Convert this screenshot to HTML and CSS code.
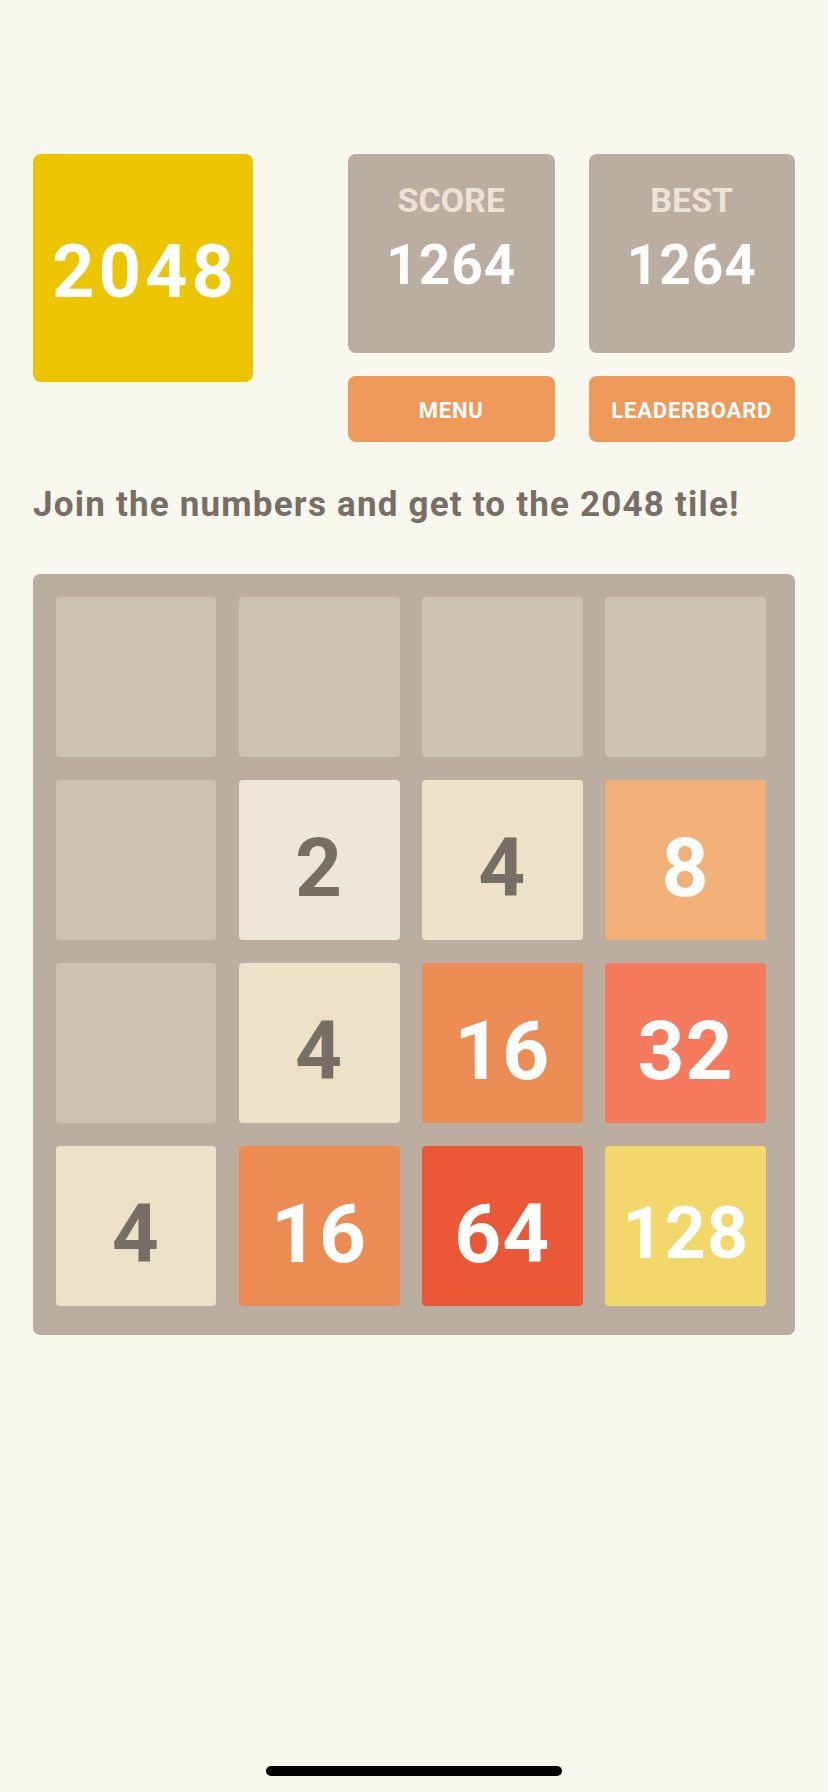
FILE: index.html
```html
<!DOCTYPE html>
<html lang="en">
<head>
<meta charset="utf-8">
<title>2048</title>
<link rel="stylesheet" href="styles.css">
</head>
<body>
<div class="page">
  <header class="header">
    <div class="title">2048</div>
    <div class="side">
      <div class="box">
        <div class="box-label">SCORE</div>
        <div class="box-value">1264</div>
      </div>
      <div class="box">
        <div class="box-label">BEST</div>
        <div class="box-value">1264</div>
      </div>
      <div class="btn">MENU</div>
      <div class="btn">LEADERBOARD</div>
    </div>
  </header>
  <p class="intro">Join the numbers and get to the 2048 tile!</p>
  <div class="board">
    <div class="cell"></div>
    <div class="cell"></div>
    <div class="cell"></div>
    <div class="cell"></div>
    <div class="cell"></div>
    <div class="cell t2">2</div>
    <div class="cell t4">4</div>
    <div class="cell t8">8</div>
    <div class="cell"></div>
    <div class="cell t4">4</div>
    <div class="cell t16">16</div>
    <div class="cell t32">32</div>
    <div class="cell t4">4</div>
    <div class="cell t16">16</div>
    <div class="cell t64">64</div>
    <div class="cell t128">128</div>
  </div>
</div>
<div class="home-indicator"></div>
</body>
</html>
```
FILE: styles.css
```css
html, body {
  margin: 0;
  padding: 0;
}
body {
  background: #f9f8ef;
  height: 1792px;
  position: relative;
  overflow: hidden;
  font-family: Roboto, "Liberation Sans", sans-serif;
}
.page {
  padding: 154px 33px 0 33px;
}
.header {
  display: flex;
  justify-content: space-between;
  align-items: flex-start;
}
.title {
  width: 220px;
  height: 228px;
  background: #ecc400;
  border-radius: 8px;
  display: flex;
  align-items: center;
  justify-content: center;
  box-sizing: border-box;
  padding-top: 8px;
  color: #fff;
  font-weight: 700;
  font-size: 74px;
  line-height: 1;
  letter-spacing: 4px;
  text-indent: 4px;
}
.side {
  display: grid;
  grid-template-columns: 206.5px 206.5px;
  grid-template-rows: 199px 66px;
  column-gap: 34px;
  row-gap: 23px;
}
.box {
  background: #bbada0;
  border-radius: 8px;
  display: flex;
  flex-direction: column;
  align-items: center;
  padding-top: 26px;
  box-sizing: border-box;
}
.box-label {
  color: #eee1d6;
  font-weight: 700;
  font-size: 34px;
  line-height: 40px;
}
.box-value {
  color: #fff;
  font-weight: 700;
  font-size: 55px;
  line-height: 60px;
  margin-top: 15px;
  letter-spacing: 1px;
}
.btn {
  background: #ed9a5b;
  border-radius: 8px;
  color: #fff;
  font-weight: 700;
  font-size: 22px;
  letter-spacing: 0.8px;
  display: flex;
  align-items: center;
  justify-content: center;
  box-sizing: border-box;
  padding-top: 3px;
}
.intro {
  margin: 43px 0 49px 0;
  color: #776e65;
  font-weight: 700;
  font-size: 35px;
  line-height: 40px;
  letter-spacing: 1.2px;
}
.board {
  width: 762px;
  box-sizing: border-box;
  background: #bbada0;
  border-radius: 7px;
  padding: 22.5px 29px 29px 22.5px;
  display: grid;
  grid-template-columns: repeat(4, 1fr);
  grid-auto-rows: 160.5px;
  gap: 22.5px;
}
.cell {
  background: #cdc1b4;
  border-radius: 4px;
  display: flex;
  align-items: center;
  justify-content: center;
  box-sizing: border-box;
  padding-top: 16px;
  font-weight: 700;
  font-size: 82px;
  line-height: 1;
  letter-spacing: 1px;
  color: #776e65;
}
.t2 { background: #eee5db; }
.t4 { background: #ede1c7; }
.t8 { background: #f1b077; color: #fff; }
.t16 { background: #ec8c55; color: #fff; }
.t32 { background: #f57a5e; color: #fff; }
.t64 { background: #ea5838; color: #fff; }
.t128 { background: #f2d86a; color: #fff; font-size: 72px; }
.home-indicator {
  position: absolute;
  left: 266px;
  top: 1766px;
  width: 296px;
  height: 10px;
  border-radius: 5px;
  background: #000;
}
```
